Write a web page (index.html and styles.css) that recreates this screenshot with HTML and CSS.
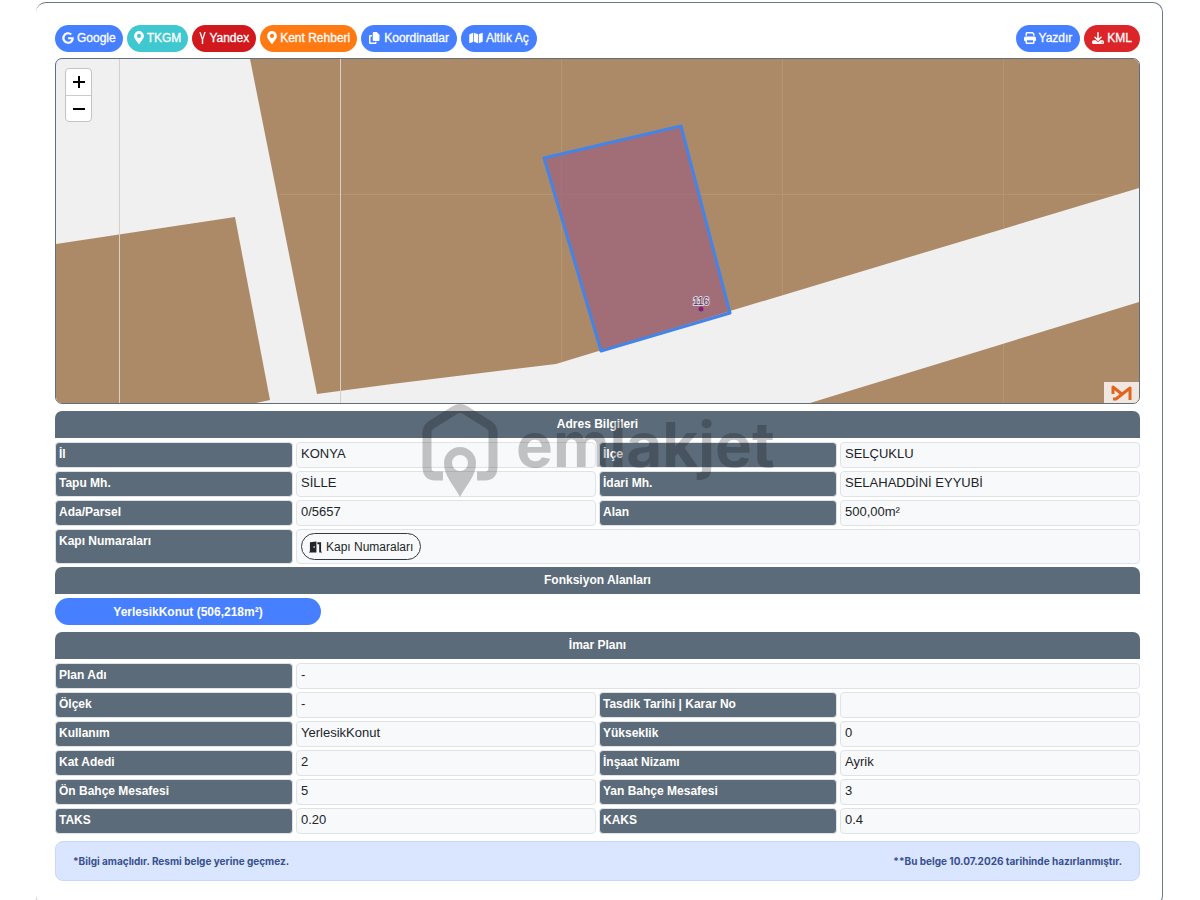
FILE: index.html
```html
<!DOCTYPE html>
<html lang="tr">
<head>
<meta charset="utf-8">
<title>Parsel Bilgileri</title>
<link rel="stylesheet" href="styles.css">
</head>
<body>
<svg class="defs" aria-hidden="true">
  <symbol id="pin" viewBox="0 0 384 512"><path d="M172 502C27 291 0 270 0 192a192 192 0 0 1 384 0c0 78-27 99-172 310a24 24 0 0 1-40 0zm20-230a80 80 0 1 0 0-160 80 80 0 0 0 0 160z"/></symbol>
</svg>
<main class="card">
  <nav class="toolbar">
    <a class="pill blue" href="#google"><svg viewBox="0 0 488 512"><path d="M488 262c0 142-97 242-240 242A248 248 0 1 1 414 73l-67 65c-88-85-252-21-252 118 0 86 69 156 153 156 98 0 135-70 140-107H248v-85h236c2 13 4 25 4 42z"/></svg>Google</a>
    <a class="pill teal" href="#tkgm"><svg class="narrow"><use href="#pin"/></svg>TKGM</a>
    <a class="pill red" href="#yandex"><svg class="slim" viewBox="0 0 256 512"><path d="M158 316V512H98V316L-10 10h64l76 240L204 0h60z"/></svg>Yandex</a>
    <a class="pill orange" href="#rehber"><svg class="narrow"><use href="#pin"/></svg>Kent Rehberi</a>
    <button class="pill blue" type="button"><svg viewBox="0 0 512 512"><path d="M208 0h124l116 116v220a48 48 0 0 1-48 48H208a48 48 0 0 1-48-48V48a48 48 0 0 1 48-48zM48 128h80v64H64v256h192v-32h64v48a48 48 0 0 1-48 48H48a48 48 0 0 1-48-48V176a48 48 0 0 1 48-48z"/></svg>Koordinatlar</button>
    <button class="pill blue" type="button"><svg class="wide" viewBox="0 0 576 512"><path d="M384 476 192 421V36l192 55zm32-1V88l127-50c16-7 33 5 33 22v335c0 10-6 19-15 22zM15 95l145-58v387L33 474c-16 6-33-5-33-22V117c0-10 6-19 15-22z"/></svg>Altlık Aç</button>
    <span class="spacer"></span>
    <button class="pill blue" type="button"><svg viewBox="0 0 512 512"><path d="M128 0a64 64 0 0 0-64 64v96h64V64h227l29 29v67h64V93c0-17-7-33-19-45l-29-29A64 64 0 0 0 355 0zM384 352v96H128v-96zm64 32h32a32 32 0 0 0 32-32v-96a64 64 0 0 0-64-64H64a64 64 0 0 0-64 64v96a32 32 0 0 0 32 32h32v64a64 64 0 0 0 64 64h256a64 64 0 0 0 64-64z"/></svg>Yazdır</button>
    <button class="pill red-light" type="button"><svg viewBox="0 0 512 512"><path d="M288 32a32 32 0 0 0-64 0v243l-73-74a32 32 0 0 0-46 46l128 128a32 32 0 0 0 46 0l128-128a32 32 0 0 0-46-46l-73 74zM64 352a64 64 0 0 0-64 64v32a64 64 0 0 0 64 64h384a64 64 0 0 0 64-64v-32a64 64 0 0 0-64-64H347l-46 45a64 64 0 0 1-90 0l-46-45zm368 56a24 24 0 1 1 0 48 24 24 0 0 1 0-48z"/></svg>KML</button>
  </nav>

  <section class="map" aria-label="Harita">
    <svg class="parcels" viewBox="0 0 1083 344" preserveAspectRatio="xMidYMid slice">
      <path class="land" d="M194 0H1083V129L674 252L500 305L336 325L261 335Z"/>
      <path class="land" d="M0 185L179 158L214 341L200 344H0Z"/>
      <path class="land" d="M754 344L1083 243V344Z"/>
      <path class="tile" d="M505.500 0V303M726.500 0V236M947.500 0V170M947.500 285V344M223 135.500H1060"/>
      <path class="tile-light" d="M63.500 0V344M284.500 0V344"/>
      <path class="parcel" d="M488 99L625 67L674 254L545 292Z"/>
      <circle class="dot" cx="645" cy="250" r="2.500"/>
      <text class="number" x="645" y="246">116</text>
    </svg>
    <div class="zoom">
      <button type="button" aria-label="Yakınlaştır"><svg viewBox="0 0 12 12"><path d="M6 0V12M0 6H12"/></svg></button>
      <button type="button" aria-label="Uzaklaştır"><svg viewBox="0 0 12 12"><path d="M0 6H12"/></svg></button>
    </div>
    <div class="credit"><svg viewBox="0 0 24 18"><path d="M3 10V3L13 11M3 15H6L20 4V16"/></svg></div>
  </section>

  <section class="block">
    <div class="address">
      <h2>Adres Bilgileri</h2>
      <svg class="watermark" viewBox="0 0 360 96" aria-hidden="true">
        <path class="mark" d="M22 73H14Q6 73 6 64V29Q6 25 10 22L34 7Q39 4 44 7L68 22Q72 25 72 29V64Q72 73 64 73H56"/>
        <path fill-rule="evenodd" d="M39 94C32 81 23 73 23 60A16 16 0 0 1 55 60C55 73 46 81 39 94ZM39 68A8 8 0 1 0 39 52A8 8 0 0 0 39 68Z"/>
        <text x="95" y="64">emlakjet</text>
      </svg>
    </div>
    <dl class="grid">
      <dt>İl</dt><dd>KONYA</dd><dt>İlçe</dt><dd>SELÇUKLU</dd>
      <dt>Tapu Mh.</dt><dd>SİLLE</dd><dt>İdari Mh.</dt><dd>SELAHADDİNİ EYYUBİ</dd>
      <dt>Ada/Parsel</dt><dd>0/5657</dd><dt>Alan</dt><dd>500,00m²</dd>
      <dt>Kapı Numaraları</dt>
      <dd class="full"><button class="door" type="button"><svg viewBox="0 0 14 12"><path fill-rule="evenodd" d="M1 1L8 0V12H0V11H1ZM5 5V7H6V5ZM9 1H13V11H14V12H11V3H9Z"/></svg>Kapı Numaraları</button></dd>
    </dl>
  </section>

  <section class="block">
    <h2>Fonksiyon Alanları</h2>
    <button class="function" type="button">YerlesikKonut (506,218m²)</button>
  </section>

  <section class="block plan">
    <h2>İmar Planı</h2>
    <dl class="grid">
      <dt>Plan Adı</dt><dd class="full">-</dd>
      <dt>Ölçek</dt><dd>-</dd><dt>Tasdik Tarihi | Karar No</dt><dd></dd>
      <dt>Kullanım</dt><dd>YerlesikKonut</dd><dt>Yükseklik</dt><dd>0</dd>
      <dt>Kat Adedi</dt><dd>2</dd><dt>İnşaat Nizamı</dt><dd>Ayrik</dd>
      <dt>Ön Bahçe Mesafesi</dt><dd>5</dd><dt>Yan Bahçe Mesafesi</dt><dd>3</dd>
      <dt>TAKS</dt><dd>0.20</dd><dt>KAKS</dt><dd>0.4</dd>
    </dl>
  </section>

  <footer class="note">
    <span>*Bilgi amaçlıdır. Resmi belge yerine geçmez.</span>
    <span>**Bu belge 10.07.2026 tarihinde hazırlanmıştır.</span>
  </footer>
</main>
</body>
</html>
```

FILE: styles.css
```css
* { box-sizing: border-box; }
body {
  margin: 0;
  background: #fff;
  color: #212529;
  font: 13px/18px "Liberation Sans", Arial, sans-serif;
}
button { font: inherit; }
.defs { position: absolute; width: 0; height: 0; }
.card {
  margin: 2px 37px 0 36px;
  padding: 22px 22px 24px 19px;
  border: 1px solid #6b7785;
  border-left-width: 0;
  border-radius: 10px;
}
.toolbar { display: flex; gap: 4px; margin-bottom: 6px; }
.spacer { flex: 1; }
.pill {
  display: flex;
  align-items: center;
  gap: 3px;
  height: 27px;
  padding: 0 7px 2px;
  border: 0;
  border-radius: 14px;
  color: #fff;
  font-size: 12px;
  text-decoration: none;
  -webkit-text-stroke: 0.3px #fff;
}
button.pill { padding: 0 8px 1px; }
.pill svg { width: 12px; height: 12px; fill: #fff; }
.pill .narrow { width: 10px; height: 13px; }
.pill .slim { width: 7px; height: 12px; }
.pill .wide { width: 14px; }
.blue { background: #467fff; }
.teal { background: #3fc8d0; }
.red { background: #d0181d; }
.orange { background: #ff7a13; }
.red-light { background: #db2528; }

.map {
  position: relative;
  height: 346px;
  margin-bottom: 7px;
  overflow: hidden;
  border: 1px solid #626e79;
  border-radius: 7px;
  background: #f0f0f0;
}
.parcels { display: block; width: 100%; height: 100%; }
.land { fill: #ad8a67; }
.tile { fill: none; stroke: #b5956d; }
.tile-light { stroke: #d6d0c8; }
.parcel { fill: #9a5c83; fill-opacity: 0.6; stroke: #4584e6; stroke-width: 3; stroke-linejoin: round; }
.dot { fill: #85207f; }
.number {
  fill: #51334e;
  stroke: #ddd0dc;
  stroke-width: 2px;
  paint-order: stroke;
  font-size: 10px;
  text-anchor: middle;
}
.zoom {
  position: absolute;
  top: 9px;
  left: 9px;
  border: 1px solid #c4c4c4;
  border-radius: 4px;
  background: #fff;
}
.zoom button {
  display: grid;
  place-items: center;
  width: 25px;
  height: 26px;
  padding: 0;
  border: 0;
  background: none;
}
.zoom button + button { border-top: 1px solid #ccc; }
.zoom svg { width: 12px; height: 12px; stroke: #000; stroke-width: 2; }
.credit {
  position: absolute;
  right: 0;
  bottom: 0;
  display: grid;
  place-items: center;
  width: 35px;
  height: 21px;
  background: #f0e7e0;
}
.credit svg { width: 24px; height: 18px; fill: none; stroke: #e2651f; stroke-width: 3; stroke-linejoin: round; }

.block { margin-bottom: 3px; }
h2 {
  margin: 0 0 4px;
  height: 27px;
  border-radius: 7px 7px 0 0;
  background: #5c6b79;
  color: #fff;
  font-size: 12px;
  line-height: 26px;
  text-align: center;
}
.address { position: relative; }
.watermark {
  position: absolute;
  top: -8px;
  left: 366px;
  width: 360px;
  height: 96px;
  overflow: visible;
  opacity: 0.22;
  pointer-events: none;
}
.mark { fill: none; stroke: #000; stroke-width: 9; }
.watermark text { font: bold 62px Inter, sans-serif; }
.grid {
  display: grid;
  grid-template-columns: 238fr 300fr 238fr 300fr;
  gap: 3px;
  margin: 0;
}
dt, dd {
  min-height: 26px;
  margin: 0;
  padding: 2px 3px 3px;
  border: 1px solid #dfe3e8;
  border-radius: 4px;
}
dt { background: #5c6b79; color: #fff; font-weight: bold; font-size: 12px; }
dd { padding-left: 4px; background: #f8f9fb; }
.full { grid-column: 2 / -1; }
.door {
  display: flex;
  align-items: center;
  gap: 4px;
  height: 27px;
  margin-top: 1px;
  padding: 0 7px;
  border: 1px solid #343a40;
  border-radius: 14px;
  background: #f8f9fa;
  color: #212529;
  font-size: 12px;
}
.door svg { width: 13px; height: 12px; fill: #212529; }
.function {
  display: block;
  width: 266px;
  height: 27px;
  margin-bottom: 7px;
  border: 0;
  border-radius: 14px;
  background: #467fff;
  color: #fff;
  font-size: 12px;
  font-weight: bold;
}
.plan { margin-bottom: 7px; }
.note {
  display: flex;
  justify-content: space-between;
  padding: 10px 17px;
  border: 1px solid #c7d8fa;
  border-radius: 8px;
  background: #dae5ff;
  color: #38508f;
  font: bold 10px/18px Inter, sans-serif;
}
```
